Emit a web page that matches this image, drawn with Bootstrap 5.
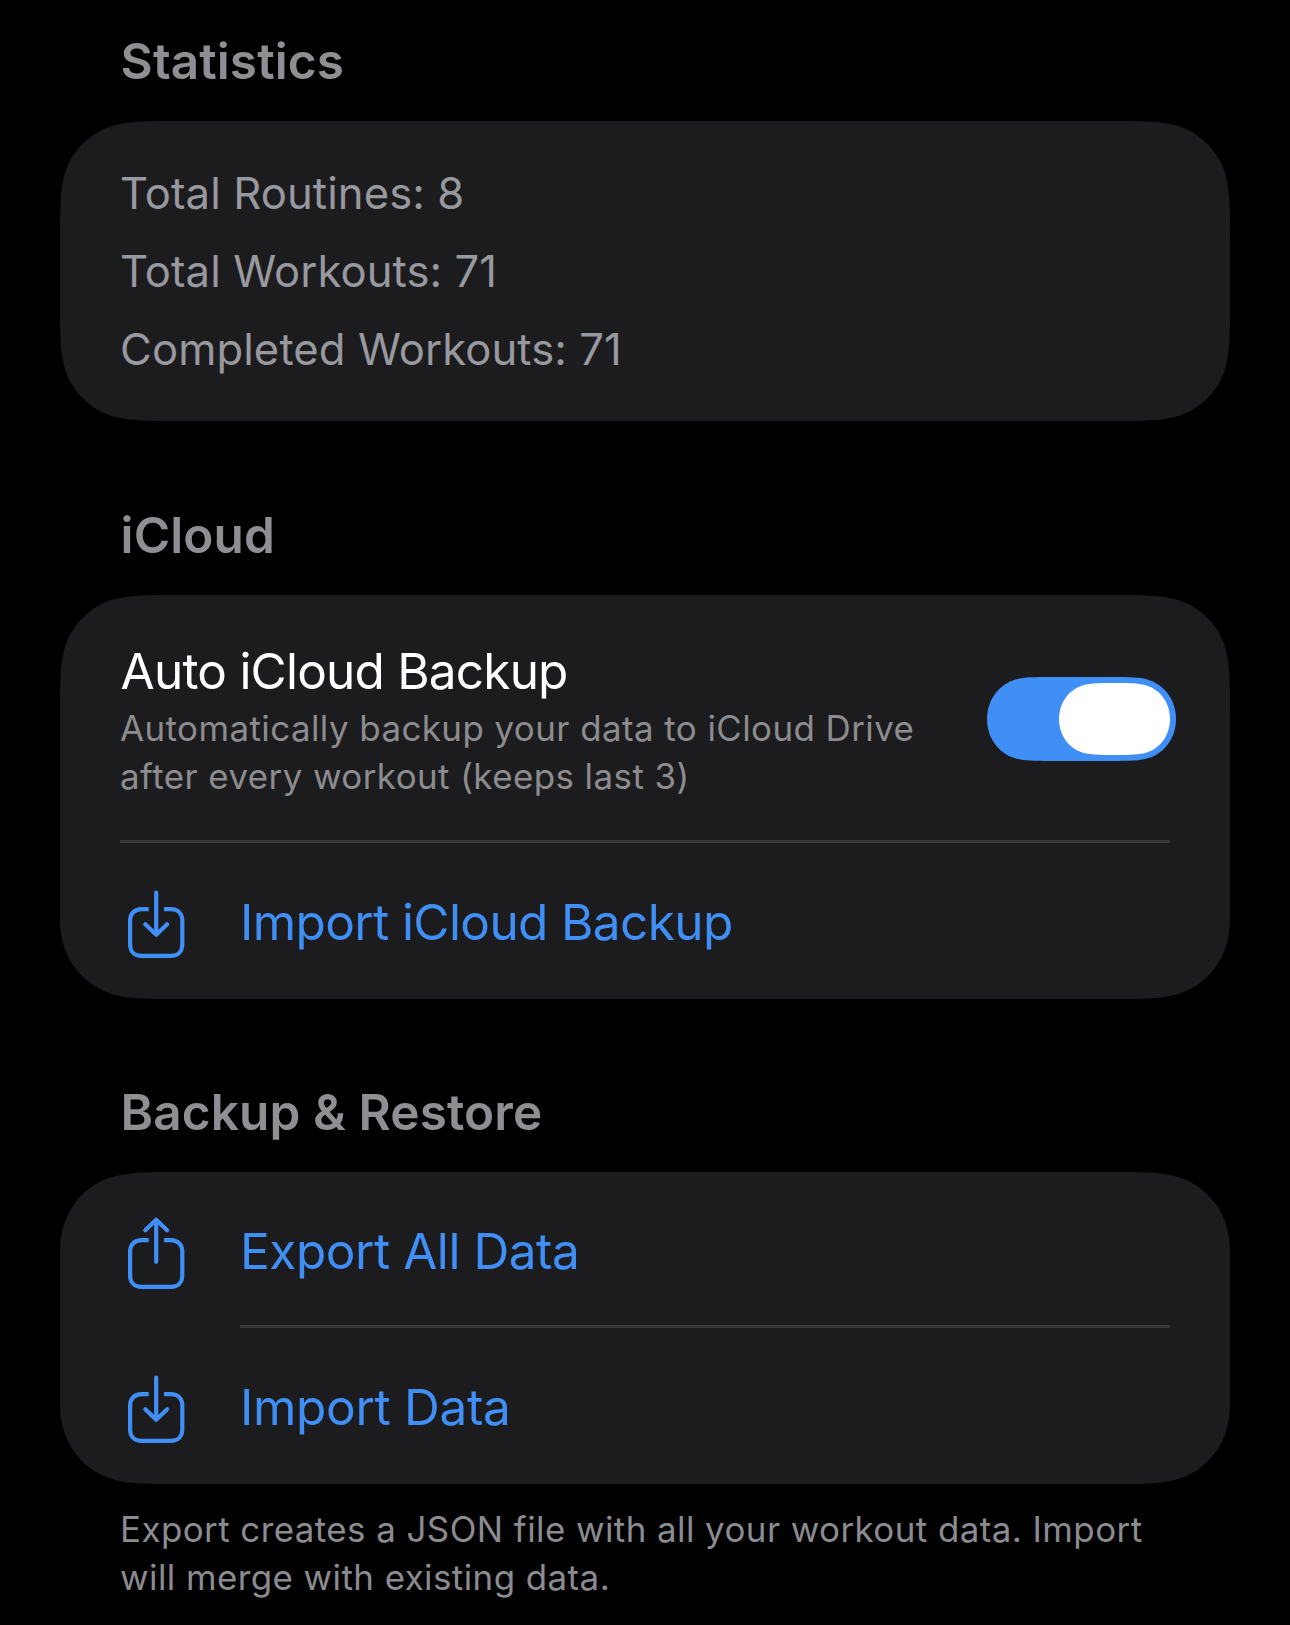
<!DOCTYPE html>
<html lang="en" data-bs-theme="dark">
<head>
<meta charset="utf-8">
<meta name="viewport" content="width=device-width, initial-scale=1">
<title>Settings</title>
<link href="https://cdn.jsdelivr.net/npm/bootstrap@5.3.0/dist/css/bootstrap.min.css" rel="stylesheet">
<style>
  body { background: #000; font-family: Inter, "Liberation Sans", sans-serif; }
  .settings { padding: 31px 60px 0; }
  .section-title { font-size: 49.5px; line-height: 60px; font-weight: 600; color: #8e8e93; margin: 0 0 30px; padding-left: 60.6px; letter-spacing: .1px; }
  .group { background: #1c1c1e; margin-bottom: 84px; }
  /* Continuous corners; groups that end in a single-height row use the tighter vertical curve there. */
  .group-stats { height: 300px; padding: 34px 60px 32px; clip-path: path("M119 0H1051C1085 0 1102 0 1120.7 5.8C1140.9 13.2 1156.8 29.1 1164.2 49.3C1170 67.7 1170 85 1170 119V181C1170 215 1170 232 1164.2 250.7C1156.8 270.9 1140.9 286.8 1120.7 294.2C1102 300 1085 300 1051 300H119C85 300 67.7 300 49.3 294.2C29.1 286.8 13.2 270.9 5.8 250.7C0 232 0 215 0 181V119C0 85 0 67.7 5.8 49.3C13.2 29.1 29.1 13.2 49.3 5.8C67.7 0 85 0 119 0Z"); }
  .group-cloud { height: 404px; margin-bottom: 83px; clip-path: path("M119 0H1051C1085 0 1102 0 1120.7 5.8C1140.9 13.2 1156.8 29.1 1164.2 49.3C1170 67.7 1170 85 1170 119V326C1170 360.4 1149.6 388.2 1120.8 398.15C1102 404 1085 404 1051 404H119C85 404 67.7 404 49.2 398.15C20.4 388.2 0 360.4 0 326V119C0 85 0 67.7 5.8 49.3C13.2 29.1 29.1 13.2 49.3 5.8C67.7 0 85 0 119 0Z"); }
  .group-data { height: 312px; margin-bottom: 21px; clip-path: path("M119 0H1051C1085 0 1102 0 1120.8 5.85C1149.6 15.8 1170 43.6 1170 78V234C1170 268.4 1149.6 296.2 1120.8 306.15C1102 312 1085 312 1051 312H119C85 312 67.7 312 49.2 306.15C20.4 296.2 0 268.4 0 234V78C0 43.6 20.4 15.8 49.2 5.85C67.7 0 85 0 119 0Z"); }
  .stat { font-size: 43.6px; line-height: 78px; color: #98989f; letter-spacing: .09px; }
  .row-title { font-size: 49.5px; line-height: 60px; color: #fff; letter-spacing: -.79px; padding-left: .6px; }
  .caption { font-size: 34.9px; line-height: 48px; color: #8c8c8f; white-space: nowrap; letter-spacing: .44px; }
  .toggle-row { height: 245px; padding: 46px 0 0 60px; }
  .toggle-row .caption { padding-top: 3px; }
  .switch { margin: 36px 54px 0 0; }
  .divider { height: 3px; margin: 0 60px; background: #38383a; }
  .action { height: 156px; color: #3f8ff7; font-size: 49.5px; text-decoration: none; padding: 0 60px; }
  .action-icon { width: 62px; margin: 0 52px 0 6px; flex: none; }
  .action-label { padding-top: 2px; }
  .ruled .action-label { padding-top: 5px; border-bottom: 3px solid #38383a; }
  .fit-a { letter-spacing: -.6px; }
  .fit-b { letter-spacing: -.45px; }
  .fit-c { letter-spacing: -.31px; }
  .import-icon { margin-top: 45px; }
  .export-icon { margin-top: 43px; }
  .footnote { color: #8b8b90; padding-left: 60px; }
</style>
</head>
<body>
<main class="settings">
  <h2 class="section-title">Statistics</h2>
  <section class="group group-stats">
    <div class="stat">Total Routines: 8</div>
    <div class="stat">Total Workouts: 71</div>
    <div class="stat">Completed Workouts: 71</div>
  </section>

  <h2 class="section-title">iCloud</h2>
  <section class="group group-cloud">
    <div class="toggle-row d-flex align-items-start justify-content-between">
      <div>
        <div class="row-title">Auto iCloud Backup</div>
        <div class="caption">Automatically backup your data to iCloud Drive<br>after every workout (keeps last 3)</div>
      </div>
      <svg class="switch" width="189" height="84" viewBox="0 0 189 84" role="switch" aria-checked="true" aria-label="Auto iCloud Backup">
        <path fill="#3f8ff7" d="M64 0H125C143 0 153 0 162.5 3.15C178 8.5 189 23.5 189 42S178 75.5 162.5 80.85C153 84 143 84 125 84H64C46 84 36 84 26.5 80.85C11 75.5 0 60.5 0 42S11 8.5 26.5 3.15C36 0 46 0 64 0Z"/>
        <path fill="#fff" transform="translate(72 6)" d="M55 0H56C71.6 0 80.1 0 88.3 2.7C101.6 7.3 111 20.1 111 36S101.6 64.7 88.3 69.3C80.1 72 71.6 72 56 72H55C39.4 72 30.9 72 22.7 69.3C9.4 64.7 0 51.9 0 36S9.4 7.3 22.7 2.7C30.9 0 39.4 0 55 0Z"/>
      </svg>
    </div>
    <div class="divider"></div>
    <a class="action d-flex" href="#">
      <svg class="action-icon import-icon" width="62" height="74" viewBox="0 0 62 74" fill="none" stroke="currentColor" stroke-width="4.2"><path d="M22.7 21.1H15.6C8.6 21.1 4.1 25.6 4.1 32.6V56.4C4.1 63.4 8.6 67.9 15.6 67.9H44.8C51.8 67.9 56.3 63.4 56.3 56.4V32.6C56.3 25.6 51.8 21.1 44.8 21.1H38"/><path stroke-linecap="round" stroke-linejoin="round" d="M30.2 4.6V46.8M19.3 36.3L30.2 46.8L41.1 36.3"/></svg>
      <span class="action-label fit-a d-flex align-items-center flex-grow-1">Import iCloud Backup</span>
    </a>
  </section>

  <h2 class="section-title">Backup &amp; Restore</h2>
  <section class="group group-data">
    <a class="action ruled d-flex" href="#">
      <svg class="action-icon export-icon" width="62" height="76" viewBox="0 0 62 76" fill="none" stroke="currentColor" stroke-width="4.2"><path d="M22.7 25.1H15.6C8.6 25.1 4.1 29.6 4.1 36.6V60.4C4.1 67.4 8.6 71.9 15.6 71.9H44.8C51.8 71.9 56.3 67.4 56.3 60.4V36.6C56.3 29.6 51.8 25.1 44.8 25.1H38"/><path stroke-linecap="round" stroke-linejoin="round" d="M30.2 46.8V4.8M19.3 15.3L30.2 4.8L41.1 15.3"/></svg>
      <span class="action-label fit-b d-flex align-items-center flex-grow-1">Export All Data</span>
    </a>
    <a class="action d-flex" href="#">
      <svg class="action-icon import-icon" width="62" height="74" viewBox="0 0 62 74" fill="none" stroke="currentColor" stroke-width="4.2"><path d="M22.7 21.1H15.6C8.6 21.1 4.1 25.6 4.1 32.6V56.4C4.1 63.4 8.6 67.9 15.6 67.9H44.8C51.8 67.9 56.3 63.4 56.3 56.4V32.6C56.3 25.6 51.8 21.1 44.8 21.1H38"/><path stroke-linecap="round" stroke-linejoin="round" d="M30.2 4.6V46.8M19.3 36.3L30.2 46.8L41.1 36.3"/></svg>
      <span class="action-label fit-c d-flex align-items-center flex-grow-1">Import Data</span>
    </a>
  </section>
  <p class="caption footnote mb-0">Export creates a JSON file with all your workout data. Import<br>will merge with existing data.</p>
</main>
<script src="https://cdn.jsdelivr.net/npm/bootstrap@5.3.0/dist/js/bootstrap.bundle.min.js"></script>
</body>
</html>
